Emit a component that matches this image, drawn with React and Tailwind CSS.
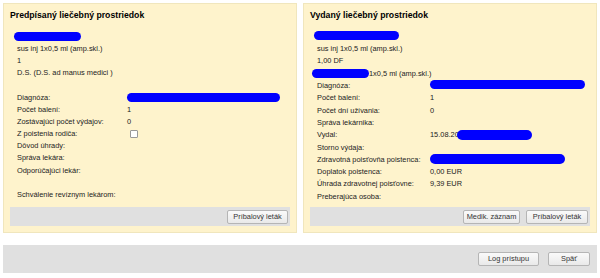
import React from 'react';

const Pill = ({ w, h = 'h-[9px]', className = '' }) => (
  <span className={`inline-block ${w} ${h} rounded-full bg-[#0000ff] align-middle ${className}`}></span>
);

const Btn = ({ children, w }) => (
  <button className={`${w} h-[14px] flex items-center justify-center rounded-[2px] border border-[#b5b5b5] bg-gradient-to-b from-[#fafafa] to-[#e9e9e9] text-[7.4px] text-[#333]`}>
    {children}
  </button>
);

function Row({ label, children, labelW, h }) {
  return (
    <div className={`flex items-center ${h}`}>
      <div className={`${labelW} shrink-0`}>{label}</div>
      <div className="flex items-center">{children}</div>
    </div>
  );
}

export default function App() {
  const leftRows = [
    { label: 'Diagnóza:', value: <Pill w="w-[153px]" /> },
    { label: 'Počet balení:', value: '1' },
    { label: 'Zostávajúci počet výdajov:', value: '0' },
    { label: 'Z poistenia rodiča:', value: <span className="ml-[3px] inline-block w-[8px] h-[8px] border border-[#999] bg-white rounded-[1px]"></span> },
    { label: 'Dôvod úhrady:', value: '' },
    { label: 'Správa lekára:', value: '' },
    { label: 'Odporúčajúci lekár:', value: '' },
    { label: '', value: '' },
    { label: 'Schválenie revíznym lekárom:', value: '' },
  ];

  const rightRows = [
    { label: 'Diagnóza:', value: <Pill w="w-[155px]" className="-mt-[3px]" /> },
    { label: 'Počet balení:', value: '1' },
    { label: 'Počet dní užívania:', value: '0' },
    { label: 'Správa lekárnika:', value: '' },
    { label: 'Vydal:', value: <><span>15.08.20</span><Pill w="w-[75px]" h="h-[10px]" className="-ml-[2px]" /></> },
    { label: 'Storno výdaja:', value: '' },
    { label: 'Zdravotná poisťovňa poistenca:', value: <Pill w="w-[135px]" h="h-[10px]" /> },
    { label: 'Doplatok poistenca:', value: '0,00 EUR' },
    { label: 'Úhrada zdravotnej poisťovne:', value: '9,39 EUR' },
    { label: 'Preberajúca osoba:', value: '' },
  ];

  return (
    <div className="w-[600px] h-[278px] bg-white p-[3px] text-[7.4px] text-[#222]" style={{ fontFamily: '"Liberation Sans", Arial, sans-serif' }}>
      <div className="flex gap-[6px]">
        {/* Predpísaný */}
        <div className="w-[294px] h-[230px] bg-[#fef3cc] border border-[#f0e6bd] flex flex-col px-[6px] pt-[5px]">
          <h2 className="text-[8.7px] font-bold text-black leading-[12px]">Predpísaný liečebný prostriedok</h2>
          <div className="pl-[7px] mt-[8px]">
            <div className="h-[14px] flex items-center -ml-[3px]"><Pill w="w-[67px]" /></div>
            <div className="h-[12px] flex items-center">sus inj 1x0,5 ml (amp.skl.)</div>
            <div className="h-[12px] flex items-center">1</div>
            <div className="h-[12px] flex items-center">D.S. (D.S. ad manus medici )</div>
            <div className="h-[12.5px]"></div>
            {leftRows.map((r, i) => (
              <Row key={i} label={r.label} labelW="w-[110px]" h="h-[12.1px]">{r.value}</Row>
            ))}
          </div>
          <div className="mt-auto mb-[6px] h-[19px] bg-[#e0e0e0] flex items-center justify-end pr-[2px]">
            <Btn w="w-[61px]">Príbalový leták</Btn>
          </div>
        </div>

        {/* Vydaný */}
        <div className="w-[294px] h-[230px] bg-[#fef3cc] border border-[#f0e6bd] flex flex-col px-[6px] pt-[5px]">
          <h2 className="text-[8.7px] font-bold text-black leading-[12px]">Vydaný liečebný prostriedok</h2>
          <div className="pl-[7px] mt-[8px]">
            <div className="h-[13px] flex items-center -ml-[3px]"><Pill w="w-[85px]" /></div>
            <div className="h-[12.5px] flex items-center">sus inj 1x0,5 ml (amp.skl.)</div>
            <div className="h-[12.5px] flex items-center">1,00 DF</div>
            <div className="h-[12.5px] flex items-center -ml-[5px]"><Pill w="w-[57px]" /><span>1x0,5 ml (amp.skl.)</span></div>
            {rightRows.map((r, i) => (
              <Row key={i} label={r.label} labelW="w-[113px]" h="h-[12.3px]">{r.value}</Row>
            ))}
          </div>
          <div className="mt-auto mb-[6px] h-[19px] bg-[#e0e0e0] flex items-center justify-end gap-[6px] pr-[2px]">
            <Btn w="w-[57px]">Medik. záznam</Btn>
            <Btn w="w-[62px]">Príbalový leták</Btn>
          </div>
        </div>
      </div>

      <div className="mt-[12px] w-[594px] h-[28px] bg-[#e0e0e0] flex items-center justify-end gap-[9px] pr-[7px]">
        <Btn w="w-[61px]">Log prístupu</Btn>
        <Btn w="w-[42px]">Späť</Btn>
      </div>
    </div>
  );
}
